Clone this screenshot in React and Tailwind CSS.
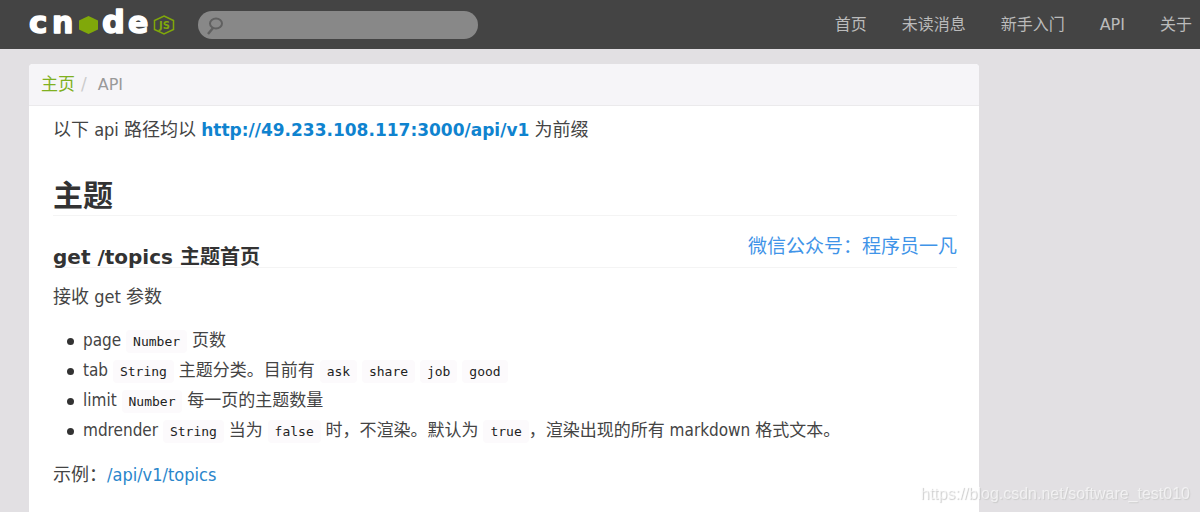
const navItems = ['首页', '未读消息', '新手入门', 'API', '关于'];

function Logo() {
    return (
        <a href="#" aria-label="cnode" className="shrink-0">
            <svg
                width="146"
                height="49"
                viewBox="0 0 146 49"
                className="font-['DejaVu_Sans','Liberation_Sans',sans-serif] font-bold"
            >
                <g fill="#fff" stroke="#fff" strokeWidth="1.5" strokeLinejoin="round">
                    <text x="0" y="33" fontSize="31">c</text>
                    <text x="23" y="33" fontSize="30">n</text>
                    <text x="73" y="33" fontSize="32">d</text>
                    <text x="99" y="33" fontSize="30">e</text>
                </g>
                <polygon points="59.5,16 69,20.5 69,29.5 59.5,34 50,29.5 50,20.5" fill="#80a80a" />
                <polygon
                    points="135,16 144.5,20.5 144.5,29.5 135,34 125.5,29.5 125.5,20.5"
                    fill="none"
                    stroke="#80a80a"
                    strokeWidth="1.5"
                />
                <text x="130" y="29" fontSize="10" fill="#80a80a">JS</text>
            </svg>
        </a>
    );
}

function Search() {
    return (
        <form className="relative ml-[23px] w-[280px]">
            <input
                type="text"
                aria-label="搜索"
                className="block h-7 w-full rounded-full bg-[#888] pl-9 pr-4 text-sm text-[#333] outline-none"
            />
            <svg
                width="18"
                height="24"
                viewBox="0 0 18 24"
                fill="none"
                stroke="#606060"
                className="pointer-events-none absolute left-2 top-1"
            >
                <ellipse cx="10" cy="8.5" rx="6" ry="5" strokeWidth="2" />
                <path d="M7 13 L2 19" strokeWidth="2.5" />
            </svg>
        </form>
    );
}

function Header() {
    return (
        <header className="flex h-[49px] items-center bg-[#444] pl-[29px] pr-2">
            <Logo />
            <Search />
            <nav className="ml-auto flex shrink-0 gap-[35px] text-base text-[#bbb]">
                {navItems.map((item) => (
                    <a key={item} href="#">{item}</a>
                ))}
            </nav>
        </header>
    );
}

function Code({ children }) {
    return (
        <code className="rounded bg-[#fcfafc] px-[7px] py-1 font-['DejaVu_Sans_Mono',monospace] text-[13px] leading-none text-[#222]">
            {children}
        </code>
    );
}

function Item({ children }) {
    return (
        <li className="before:mr-[9px] before:inline-block before:size-[7px] before:rounded-full before:bg-[#333] before:align-middle before:content-['']">
            {children}
        </li>
    );
}

function Article() {
    return (
        <article className="pb-6 pl-6 pr-[22px] font-['DejaVu_Sans_Condensed','Noto_Sans_CJK_SC',sans-serif] text-lg leading-[30px] text-[#444]">
            <p className="pt-[9px]">
                以下 api 路径均以{' '}
                <a href="#" className="font-['DejaVu_Sans',sans-serif] text-[17px] font-bold text-[#0f83cf]">
                    http://49.233.108.117:3000/api/v1
                </a>{' '}
                为前缀
            </p>

            <h2 className="mt-8 border-b border-[#f4f4f4] text-[30px] font-bold leading-[38px] text-[#333]">主题</h2>

            <div className="relative mt-[31px]">
                <h3 className="border-b border-[#f4f4f4] font-['DejaVu_Sans','Noto_Sans_CJK_SC',sans-serif] text-xl font-bold leading-5 text-[#333]">
                    get /topics 主题首页
                </h3>
                <span className="absolute bottom-2 right-0 font-['Noto_Sans_CJK_SC',sans-serif] text-[19px] text-[#3f94e8]">
                    微信公众号：程序员一凡
                </span>
            </div>

            <p className="mt-[14px]">接收 get 参数</p>

            <ul className="mb-[15px] mt-[13px] pl-[14px] text-[17px]">
                <Item>page <Code>Number</Code> 页数</Item>
                <Item>
                    tab <Code>String</Code> 主题分类。目前有 <Code>ask</Code> <Code>share</Code> <Code>job</Code>{' '}
                    <Code>good</Code>
                </Item>
                <Item>limit <Code>Number</Code> 每一页的主题数量</Item>
                <Item>
                    mdrender <Code>String</Code> 当为 <Code>false</Code> 时，不渲染。默认为 <Code>true</Code>
                    ，渲染出现的所有 markdown 格式文本。
                </Item>
            </ul>

            <p>
                示例：<a href="#" className="text-[#2a86cb]">/api/v1/topics</a>
            </p>
        </article>
    );
}

export default function App() {
    return (
        <div className="flex min-h-screen flex-col bg-[#e2e0e3] font-['DejaVu_Sans','Noto_Sans_CJK_SC',sans-serif]">
            <Header />
            <main className="flex flex-1 px-[29px] pt-[15px]">
                <section className="w-full max-w-[950px] rounded-t bg-white">
                    <nav className="flex h-[42px] items-center rounded-t border-b border-[#ebeaec] bg-[#f6f5f8] px-3 text-[17px] text-[#999]">
                        <a href="#" className="text-[#80b020]">主页</a>
                        <span className="pl-[6px] pr-[11px] text-[#ccc]">/</span>
                        <span className="text-base">API</span>
                    </nav>
                    <Article />
                </section>
            </main>
            <div className="fixed bottom-2 right-[10px] font-['Liberation_Sans',sans-serif] text-base leading-5 text-white/60 [text-shadow:1px_1px_1px_#ccc]">
                https://blog.csdn.net/software_test010
            </div>
        </div>
    );
}
